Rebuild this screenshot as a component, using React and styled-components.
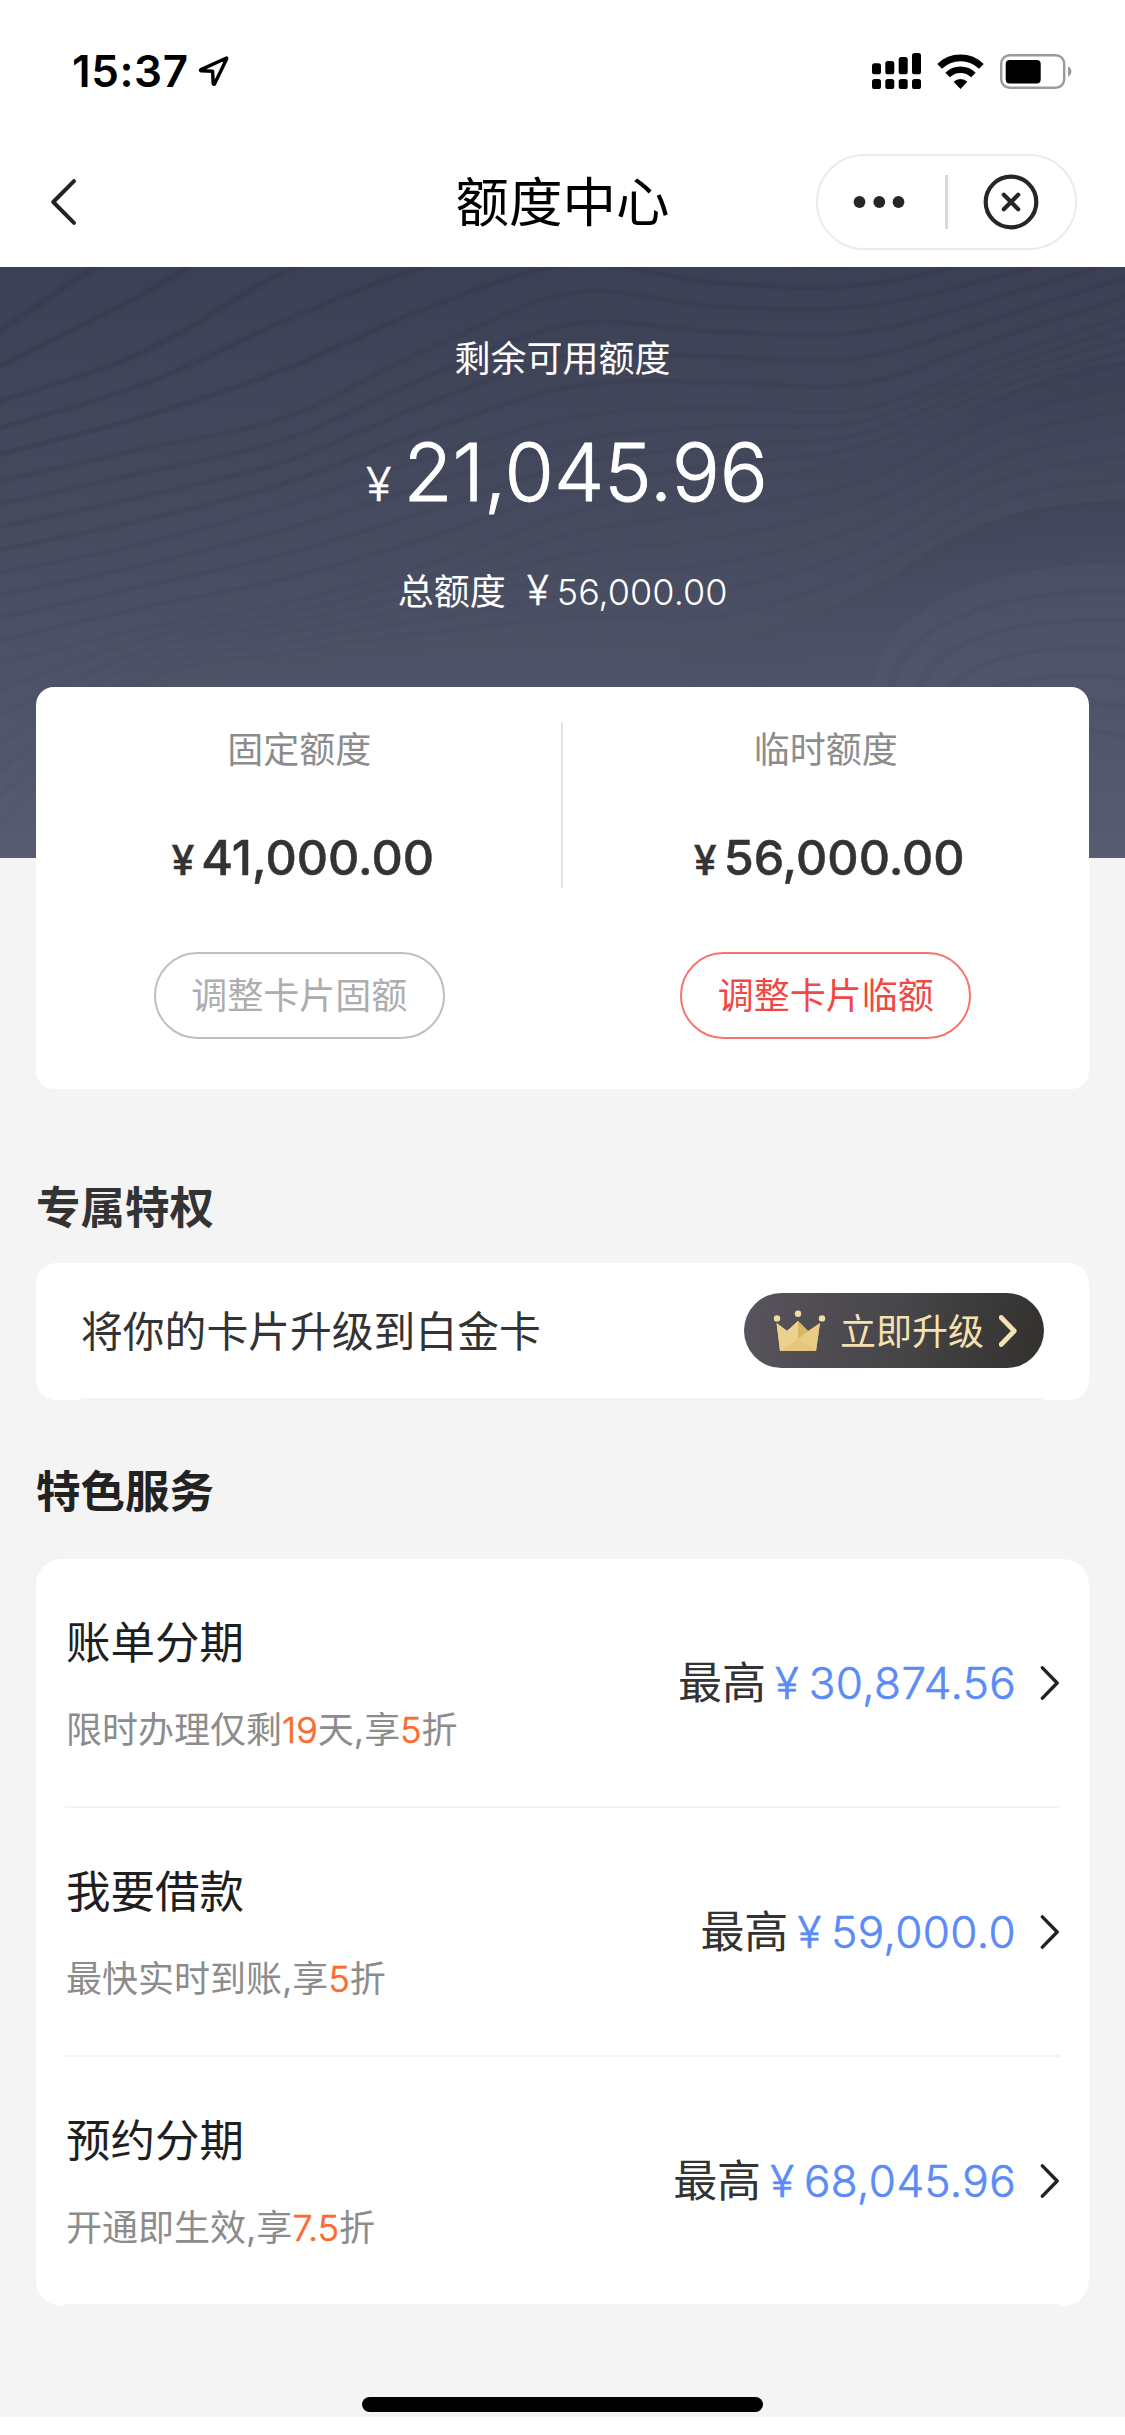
import React from 'react';
import styled, { createGlobalStyle } from 'styled-components';

const GlobalStyle = createGlobalStyle`
  * {
    box-sizing: border-box;
  }
  body {
    margin: 0;
    background: #fff;
    font-family: Inter, 'Noto Sans CJK SC', sans-serif;
    color: #333;
  }
`;

const Page = styled.div`
  width: 1125px;
  height: 2435px;
  overflow: hidden;
`;

const StatusBar = styled.div`
  display: flex;
  align-items: center;
  height: 142px;
  padding: 0 53px 0 72px;
`;

const Clock = styled.div`
  font-size: 44px;
  font-weight: 600;
  line-height: 60px;
  letter-spacing: 0.6px;
  color: #000;
  width: 126px;
  white-space: nowrap;
`;

const StatusIcons = styled.div`
  display: flex;
  align-items: center;
  gap: 16px;
  margin-left: auto;
`;

const NavBar = styled.div`
  display: grid;
  grid-template-columns: 309px 1fr 309px;
  align-items: center;
  height: 125px;
  padding-bottom: 6px;
`;

const BackButton = styled.div`
  display: flex;
  padding-left: 49px;
`;

const NavTitle = styled.div`
  padding-top: 2px;
  font-size: 53.5px;
  line-height: 70px;
  text-align: center;
  color: #000;
`;

const Capsule = styled.div`
  display: flex;
  align-items: center;
  width: 261px;
  height: 96px;
  border: 2px solid #ebebeb;
  border-radius: 48px;
`;

const CapsuleHalf = styled.div`
  width: 127px;
  display: flex;
  justify-content: center;
  padding-right: ${(props) => props.$shift}px;
`;

const CapsuleLine = styled.div`
  width: 3px;
  height: 54px;
  background: #d8d8d8;
`;

const Hero = styled.div`
  position: relative;
  display: flex;
  flex-direction: column;
  align-items: center;
  height: 591px;
  padding-top: 70px;
  background: linear-gradient(#3c4054, #474b5f 45%, #575c72);
  color: #fff;
`;

const Waves = styled.svg`
  position: absolute;
  inset: 0;
  width: 100%;
  height: 100%;
`;

const HeroLabel = styled.div`
  position: relative;
  font-size: 36px;
  line-height: 44px;
`;

const HeroAmount = styled.div`
  position: relative;
  display: flex;
  align-items: baseline;
  margin-top: 43px;
  padding-left: 9px;
  font-size: 80px;
  font-weight: 300;
  line-height: 96px;
  -webkit-text-stroke: 0.9px #fff;
`;

const HeroYen = styled.span`
  margin-right: 12px;
  font-size: 47px;
  line-height: 48px;
  -webkit-text-stroke-width: 0.4px;
`;

const HeroTotal = styled.div`
  position: relative;
  display: flex;
  align-items: baseline;
  margin-top: 50px;
  font-size: 36px;
  line-height: 44px;
`;

const TotalYen = styled.span`
  margin: 0 8px 0 21px;
  font-size: 41px;
  font-weight: 300;
  line-height: 40px;
  -webkit-text-stroke: 0.3px #fff;
`;

const TotalValue = styled.span`
  font-weight: 300;
`;

const LimitCard = styled.div`
  position: relative;
  display: flex;
  height: 402px;
  margin: -171px 36px 0;
  border-radius: 18px;
  background: #fff;
`;

const LimitColumn = styled.div`
  flex: 1;
  display: flex;
  flex-direction: column;
  align-items: center;
  padding-top: 41px;
`;

const LimitDivider = styled.div`
  width: 2px;
  height: 166px;
  margin: 35px 0 0 -2px;
  background: #e2e2e8;
`;

const LimitLabel = styled.div`
  font-size: 36px;
  line-height: 44px;
  color: #8c8c8c;
`;

const LimitAmount = styled.div`
  display: flex;
  align-items: baseline;
  margin-top: 56px;
  padding-left: 7px;
  font-size: 48.5px;
  font-weight: 500;
  line-height: 60px;
  -webkit-text-stroke: 0.5px #333;
`;

const LimitYen = styled.span`
  margin-right: 7px;
  font-size: 41px;
  line-height: 40px;
`;

const OutlineButton = styled.div`
  display: flex;
  align-items: center;
  justify-content: center;
  width: 291px;
  height: 87px;
  margin-top: 64px;
  border: 2px solid ${(props) => (props.$active ? '#f7736f' : '#bfbfbf')};
  border-radius: 44px;
  font-size: 36px;
  line-height: 44px;
  color: ${(props) => (props.$active ? '#f04844' : '#adadad')};
`;

const Content = styled.div`
  display: flow-root;
  height: 1559px;
  background: #f4f4f4;
`;

const SectionTitle = styled.div`
  padding: ${(props) => props.$top}px 36px ${(props) => props.$bottom}px;
  font-size: 44.5px;
  font-weight: 700;
  line-height: 60px;
  color: ${(props) => props.$color};
`;

const UpgradeCard = styled.div`
  height: 137px;
  margin: 0 36px;
  padding: 0 45px;
  border-radius: 20px;
  background: #fff;
`;

const UpgradeRow = styled.div`
  display: flex;
  align-items: center;
  justify-content: space-between;
  height: 137px;
  border-bottom: 2px solid #f4f4f4;
  font-size: 41.8px;
  line-height: 60px;
`;

const UpgradeText = styled.div`
  padding-top: 2px;
`;

const UpgradeButton = styled.div`
  display: flex;
  align-items: center;
  width: 300px;
  height: 75px;
  padding-left: 28px;
  border-radius: 38px;
  background: linear-gradient(100deg, #58545d, #474649 50%, #32312e);
  font-size: 36px;
  line-height: 44px;
  color: #f5e1b2;
`;

const UpgradeLabel = styled.span`
  margin: 0 15px 0 14px;
  padding-top: 2px;
`;

const ServiceCard = styled.div`
  margin: 0 36px;
  padding: 0 29px;
  border-radius: 26px;
  background: #fff;
`;

const ServiceRow = styled.div`
  display: flex;
  align-items: center;
  height: 249px;
  border-bottom: 2px solid #f4f4f4;
`;

const ServiceText = styled.div`
  flex: 1;
  padding: 2px 0 0 1px;
`;

const ServiceName = styled.div`
  font-size: 44.5px;
  line-height: 60px;
  color: #1f1f1f;
`;

const ServiceNote = styled.div`
  margin-top: 33px;
  font-size: 36px;
  line-height: 48px;
  color: #8c8c8c;

  em {
    font-style: normal;
    font-weight: 300;
    color: #fb6b2e;
    -webkit-text-stroke: 0.6px #fb6b2e;
  }
`;

const ServiceMax = styled.div`
  display: flex;
  align-items: baseline;
  font-size: 44px;
  line-height: 60px;
`;

const ServiceYen = styled.span`
  margin: 0 10px 0 9px;
  font-weight: 300;
  color: #5a8bf7;
  -webkit-text-stroke: 0.6px #5a8bf7;
`;

const ServiceAmount = styled.span`
  margin-right: 24px;
  font-weight: 300;
  letter-spacing: 0.4px;
  color: #5a8bf7;
  -webkit-text-stroke: 0.6px #5a8bf7;
`;

const HomeBar = styled.div`
  width: 401px;
  height: 15px;
  margin: 91px auto 0;
  border-radius: 8px;
  background: #000;
`;

const waveX = [-20, 200, 400, 600, 800, 1000, 1200, 1400, 1590];

// each key line is a list of heights at waveX; the lines between two keys are blended
const waveKeys = [
  { y: [185, -80, -300, -420, -450, -400, -400, -500, -560], steps: 2, alpha: 0.2 },
  { y: [350, 215, 10, -110, -150, -80, -60, -150, -270], steps: 3, alpha: 0.2 },
  { y: [550, 460, 380, 205, 65, 100, 100, 20, -80], steps: 4, alpha: 0.15 },
  { y: [780, 700, 600, 480, 380, 355, 360, 225, 110], steps: 4, alpha: 0.09 },
  { y: [1010, 915, 850, 750, 620, 550, 485, 325, 235], steps: 6, alpha: 0.04 },
  { y: [1440, 1080, 1000, 960, 940, 950, 830, 640, 590], steps: 1, alpha: 0.03 },
];

const bumps = [0, 1, 2, 3, 4, 5];

function smoothLine(ys) {
  let d = `M${waveX[0]} ${ys[0]}`;
  for (let i = 0; i < ys.length - 1; i++) {
    const x0 = waveX[Math.max(i - 1, 0)];
    const y0 = ys[Math.max(i - 1, 0)];
    const x3 = waveX[Math.min(i + 2, ys.length - 1)];
    const y3 = ys[Math.min(i + 2, ys.length - 1)];
    const c1 = `${waveX[i] + (waveX[i + 1] - x0) / 6} ${ys[i] + (ys[i + 1] - y0) / 6}`;
    const c2 = `${waveX[i + 1] - (x3 - waveX[i]) / 6} ${ys[i + 1] - (y3 - ys[i]) / 6}`;
    d += ` C${c1} ${c2} ${waveX[i + 1]} ${ys[i + 1]}`;
  }
  return d;
}

function waveLines() {
  const lines = [];
  waveKeys.forEach((key, k) => {
    const next = waveKeys[k + 1] || key;
    for (let s = 0; s < key.steps; s++) {
      const t = s / key.steps;
      lines.push({
        d: smoothLine(key.y.map((y, i) => y + (next.y[i] - y) * t)),
        alpha: key.alpha,
      });
    }
  });
  return lines;
}

const WaveBackground = () => (
  <Waves viewBox="0 0 1568 1495" preserveAspectRatio="none">
    <defs>
      <linearGradient id="fold" x1="0" y1="0" x2="0.25" y2="1">
        <stop offset="0" stopColor="#35334a" stopOpacity="0.3" />
        <stop offset="0.6" stopColor="#35334a" stopOpacity="0.06" />
        <stop offset="1" stopColor="#35334a" stopOpacity="0" />
      </linearGradient>
    </defs>
    <path d="M850 620C1050 560 1160 520 1250 460C1350 380 1450 240 1590 235V700H850Z" fill="url(#fold)" />
    <path d="M950 980C1100 920 1200 840 1290 720C1380 630 1450 590 1590 590V1060H950Z" fill="url(#fold)" />
    <path d="M1215 1090C1215 900 1340 740 1590 750V1090Z" fill="#5b6077" fillOpacity="0.2" />
    <g fill="none" stroke="#2c2c42">
      {waveLines().map((line, i) => (
        <g key={i}>
          <path d={line.d} strokeWidth="16" strokeOpacity={line.alpha * 0.45} />
          <path d={line.d} strokeWidth="7" strokeOpacity={line.alpha * 0.6} />
        </g>
      ))}
      {bumps.map((n) => (
        <path
          key={n}
          d={`M${1240 + n * 40} ${1090 + n * 20}C${1240 + n * 34} ${930 + n * 50} ${1360 + n * 16} ${810 + n * 65} 1590 ${820 + n * 75}`}
          strokeWidth="12"
          strokeOpacity="0.07"
        />
      ))}
    </g>
  </Waves>
);

const LocationIcon = () => (
  <svg width="31" height="32" viewBox="0 0 31 32">
    <path
      d="M28 3.2L3 14.6Q1.8 15.4 3.2 15.8L14.6 16.2L15.2 28.6Q15.6 30 16.6 28.8L28.6 4Q29 2.6 28 3.2Z"
      fill="none"
      stroke="#000"
      strokeWidth="3.4"
      strokeLinejoin="round"
    />
  </svg>
);

const SignalIcon = () => (
  <svg width="49" height="36" viewBox="0 0 49 36">
    <rect x="0" y="10.3" width="9" height="11" rx="2.6" />
    <rect x="13.3" y="8" width="9" height="13.3" rx="2.6" />
    <rect x="26.7" y="4" width="9" height="17.3" rx="2.6" />
    <rect x="40" y="0" width="9" height="21.3" rx="2.6" />
    <rect x="0" y="26" width="9" height="10" rx="2.6" />
    <rect x="13.3" y="26" width="9" height="10" rx="2.6" />
    <rect x="26.7" y="26" width="9" height="10" rx="2.6" />
    <rect x="40" y="26" width="9" height="10" rx="2.6" />
  </svg>
);

const WifiIcon = () => (
  <svg width="47" height="35" viewBox="0 0 47 35">
    <path d="M2.6 12.4A30 30 0 0 1 44.4 12.4" fill="none" stroke="#000" strokeWidth="6.6" />
    <path d="M10.6 21A18.6 18.6 0 0 1 36.4 21" fill="none" stroke="#000" strokeWidth="6.4" />
    <path d="M23.5 35L16.6 27.8A9.8 9.8 0 0 1 30.4 27.8Z" />
  </svg>
);

const BatteryIcon = () => (
  <svg width="72" height="35" viewBox="0 0 72 35">
    <rect x="1.2" y="1.2" width="63" height="32.6" rx="8.5" fill="none" stroke="#9a9a9a" strokeWidth="2.4" />
    <rect x="5.7" y="6" width="35" height="23.4" rx="4" />
    <path d="M68 12.5A5.4 5.4 0 0 1 68 22.5Z" fill="#9a9a9a" />
  </svg>
);

const BackIcon = () => (
  <svg width="30" height="50" viewBox="0 0 30 50">
    <path d="M25 4.2L4.2 25L25 45.8" fill="none" stroke="#222" strokeWidth="4" strokeLinecap="round" strokeLinejoin="round" />
  </svg>
);

const MoreIcon = () => (
  <svg width="52" height="14" viewBox="0 0 52 14" fill="#262626">
    <circle cx="6.5" cy="7" r="5.9" />
    <circle cx="26.3" cy="7" r="5.9" />
    <circle cx="45.5" cy="7" r="5.9" />
  </svg>
);

const CloseIcon = () => (
  <svg width="56" height="56" viewBox="0 0 56 56" fill="none" stroke="#262626" strokeWidth="4.2" strokeLinecap="round">
    <circle cx="28" cy="28" r="25.3" />
    <path d="M20.8 20.8L35.2 35.2M35.2 20.8L20.8 35.2" />
  </svg>
);

const CrownIcon = () => (
  <svg width="54" height="42" viewBox="0 0 54 42">
    <path d="M4.6 13L15 21L26 11L36 21L48 13L44 41H8Z" fill="#e6c67c" />
    <path d="M26 11L15 21L26 29Z" fill="#edd293" />
    <path d="M26 11L36 21L26 29Z" fill="#d9b566" />
    <path d="M4.6 13L26 29L8 41Z" fill="#ecd08e" />
    <path d="M48 13L26 29L44 41Z" fill="#e9cb84" />
    <circle cx="5" cy="8.4" r="3.2" fill="#f3dca4" />
    <circle cx="26" cy="3.8" r="3.2" fill="#f3dca4" />
    <circle cx="50" cy="8.4" r="3.2" fill="#f3dca4" />
  </svg>
);

const ArrowIcon = ({ color, weight, size }) => (
  <svg width={size * 0.555} height={size} viewBox="0 0 20 36">
    <path d="M2.4 2.8L17.2 18L2.4 33.2" fill="none" stroke={color} strokeWidth={weight} strokeLinejoin="round" strokeLinecap="round" />
  </svg>
);

const services = [
  { name: '账单分期', note: <>限时办理仅剩<em>19</em>天,享<em>5</em>折</>, amount: '30,874.56' },
  { name: '我要借款', note: <>最快实时到账,享<em>5</em>折</>, amount: '59,000.0' },
  { name: '预约分期', note: <>开通即生效,享<em>7.5</em>折</>, amount: '68,045.96' },
];

const App = () => {
  return (
    <Page>
      <GlobalStyle />
      <StatusBar>
        <Clock>15:37</Clock>
        <LocationIcon />
        <StatusIcons>
          <SignalIcon />
          <WifiIcon />
          <BatteryIcon />
        </StatusIcons>
      </StatusBar>
      <NavBar>
        <BackButton><BackIcon /></BackButton>
        <NavTitle>额度中心</NavTitle>
        <Capsule>
          <CapsuleHalf $shift={6}><MoreIcon /></CapsuleHalf>
          <CapsuleLine />
          <CapsuleHalf $shift={2}><CloseIcon /></CapsuleHalf>
        </Capsule>
      </NavBar>

      <Hero>
        <WaveBackground />
        <HeroLabel>剩余可用额度</HeroLabel>
        <HeroAmount><HeroYen>¥</HeroYen>21,045.96</HeroAmount>
        <HeroTotal>总额度<TotalYen>¥</TotalYen><TotalValue>56,000.00</TotalValue></HeroTotal>
      </Hero>

      <Content>
        <LimitCard>
          <LimitColumn>
            <LimitLabel>固定额度</LimitLabel>
            <LimitAmount><LimitYen>¥</LimitYen>41,000.00</LimitAmount>
            <OutlineButton>调整卡片固额</OutlineButton>
          </LimitColumn>
          <LimitDivider />
          <LimitColumn>
            <LimitLabel>临时额度</LimitLabel>
            <LimitAmount><LimitYen>¥</LimitYen>56,000.00</LimitAmount>
            <OutlineButton $active>调整卡片临额</OutlineButton>
          </LimitColumn>
        </LimitCard>

        <SectionTitle $top={89} $bottom={25} $color="#333">专属特权</SectionTitle>
        <UpgradeCard>
          <UpgradeRow>
            <UpgradeText>将你的卡片升级到白金卡</UpgradeText>
            <UpgradeButton>
              <CrownIcon />
              <UpgradeLabel>立即升级</UpgradeLabel>
              <ArrowIcon color="#f5e1b2" weight={5.4} size={32} />
            </UpgradeButton>
          </UpgradeRow>
        </UpgradeCard>

        <SectionTitle $top={62} $bottom={37} $color="#222">特色服务</SectionTitle>
        <ServiceCard>
          {services.map((item) => (
            <ServiceRow key={item.name}>
              <ServiceText>
                <ServiceName>{item.name}</ServiceName>
                <ServiceNote>{item.note}</ServiceNote>
              </ServiceText>
              <ServiceMax>
                最高
                <ServiceYen>¥</ServiceYen>
                <ServiceAmount>{item.amount}</ServiceAmount>
              </ServiceMax>
              <ArrowIcon color="#222" weight={3.4} size={36} />
            </ServiceRow>
          ))}
        </ServiceCard>
        <HomeBar />
      </Content>
    </Page>
  );
};

export default App;
